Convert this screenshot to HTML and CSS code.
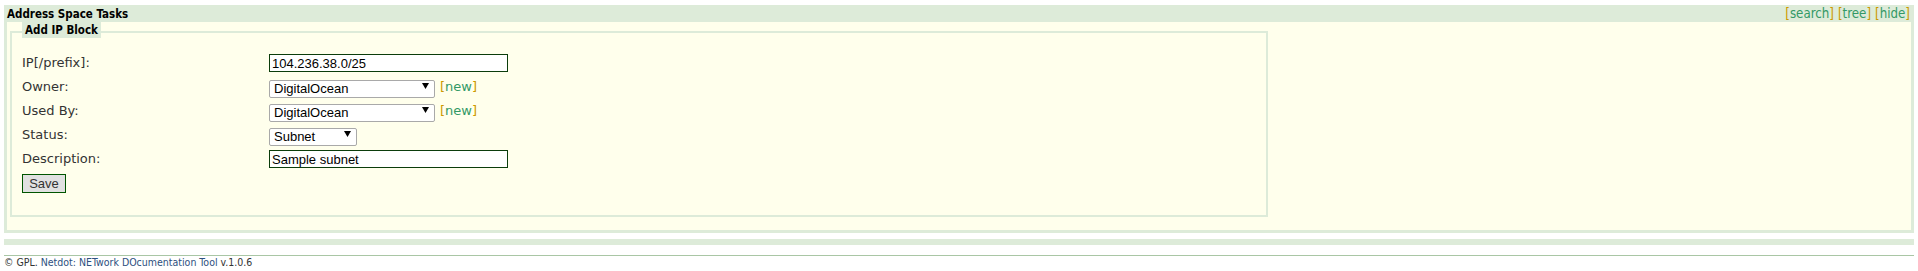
FILE: index.html
```html
<!DOCTYPE html>
<html lang="en">
<head>
<meta charset="utf-8">
<title>Netdot - Address Space Tasks</title>
<link rel="stylesheet" href="styles.css">
</head>
<body>
<div class="page">
  <div class="panel">
    <div class="panel-head">
      <span class="panel-title">Address Space Tasks</span>
      <span class="panel-links">
        <a class="lnk" href="#"><span class="br">[</span>search<span class="br">]</span></a>
        <a class="lnk" href="#"><span class="br">[</span>tree<span class="br">]</span></a>
        <a class="lnk" href="#"><span class="br">[</span>hide<span class="br">]</span></a>
      </span>
    </div>
    <div class="panel-body">
      <fieldset class="form-box">
        <legend class="form-legend">Add IP Block</legend>
        <div class="form-grid">
          <label class="form-label">IP[/prefix]:</label>
          <div class="form-ctl"><input class="txt" type="text" value="104.236.38.0/25"></div>

          <label class="form-label">Owner:</label>
          <div class="form-ctl">
            <span class="sel sel-wide"><select><option>DigitalOcean</option></select></span>
            <a class="lnk lnk-new" href="#"><span class="br">[</span>new<span class="br">]</span></a>
          </div>

          <label class="form-label">Used By:</label>
          <div class="form-ctl">
            <span class="sel sel-wide"><select><option>DigitalOcean</option></select></span>
            <a class="lnk lnk-new" href="#"><span class="br">[</span>new<span class="br">]</span></a>
          </div>

          <label class="form-label">Status:</label>
          <div class="form-ctl">
            <span class="sel sel-narrow"><select><option>Subnet</option></select></span>
          </div>

          <label class="form-label">Description:</label>
          <div class="form-ctl"><input class="txt" type="text" value="Sample subnet"></div>
        </div>
        <button class="btn" type="button">Save</button>
      </fieldset>
    </div>
  </div>
  <div class="bar"></div>
  <div class="footer">
    <span class="muted">&copy; GPL.</span>
    <a class="foot-link" href="#">Netdot: NETwork DOcumentation Tool</a>
    <span class="muted">v.1.0.6</span>
  </div>
</div>
</body>
</html>
```

FILE: styles.css
```css
* { box-sizing: border-box; }

html, body {
  margin: 0;
  padding: 0;
  background: #ffffff;
}

body {
  font-family: "DejaVu Sans", Verdana, sans-serif;
  color: #333;
}

.page {
  padding: 5px 4px 0;
}

.panel-head {
  height: 17px;
  background: #ddebd9;
  display: flex;
  justify-content: space-between;
  align-items: baseline;
  padding: 2px 4px 0 3px;
}

.panel-title {
  font-family: "DejaVu Sans Condensed", "DejaVu Sans", sans-serif;
  font-weight: bold;
  font-size: 11.5px;
  line-height: 14px;
  color: #000;
}

.panel-links {
  font-family: "DejaVu Sans Condensed", "DejaVu Sans", sans-serif;
  font-size: 13.2px;
  line-height: 14px;
  display: flex;
  gap: 4px;
}

.lnk {
  color: #339966;
  text-decoration: none;
}

.lnk .br {
  color: #cc9900;
}

.panel-body {
  background: #ffffec;
  border: 3px solid #ddebd9;
  border-top: 0;
  padding: 0 3px 13px;
}

.form-box {
  width: 1258px;
  margin: 0;
  border: 2px solid #ddebd9;
  padding: 12px 10px 22px;
  min-width: 0;
}

.form-legend {
  font-family: "DejaVu Sans Condensed", "DejaVu Sans", sans-serif;
  font-weight: bold;
  font-size: 11.5px;
  line-height: 16px;
  color: #000;
  background: #ddebd9;
  background-clip: padding-box;
  border-bottom: 4px solid transparent;
  padding: 0 3px;
}

.form-grid {
  display: grid;
  grid-template-columns: 247px auto;
  grid-auto-rows: 18px;
  row-gap: 6px;
  align-items: center;
}

.form-label {
  font-size: 13px;
  line-height: 18px;
  color: #333;
}

.form-ctl {
  display: flex;
  align-items: center;
  gap: 5px;
  height: 18px;
}

.txt {
  width: 239px;
  height: 18px;
  border: 1px solid #0b3d0b;
  padding: 0 2px;
  margin: 0;
  font-family: "Liberation Sans", Arial, sans-serif;
  font-size: 13px;
  color: #000;
  background: #fff;
  outline: none;
}

.sel {
  position: relative;
  display: inline-block;
  height: 18px;
}

.sel select {
  -webkit-appearance: none;
  appearance: none;
  width: 100%;
  height: 18px;
  margin: 0;
  border: 1px solid #a9a9a9;
  border-radius: 2px;
  background: #fff;
  padding: 0 0 0 4px;
  font-family: "Liberation Sans", Arial, sans-serif;
  font-size: 13px;
  color: #000;
}

.sel::after {
  content: "";
  position: absolute;
  right: 6px;
  top: 5px;
  width: 7px;
  height: 6px;
  background: #000;
  clip-path: polygon(0 0, 100% 0, 50% 100%);
  pointer-events: none;
}

.sel-wide { width: 166px; }
.sel-narrow { width: 88px; }

.lnk-new {
  font-size: 13px;
  line-height: 18px;
}

.btn {
  display: block;
  margin: 6px 0 0;
  width: 44px;
  height: 19px;
  padding: 0;
  border: 1px solid #005500;
  background: #e1e1e1;
  font-family: "Liberation Sans", Arial, sans-serif;
  font-size: 13px;
  color: #333;
}

.bar {
  height: 6px;
  margin-top: 6px;
  background: #ddebd9;
}

.footer {
  margin-top: 10px;
  border-top: 1px solid #a9c6a5;
  font-family: "DejaVu Sans Condensed", "DejaVu Sans", sans-serif;
  font-size: 10.5px;
  line-height: 12px;
  padding-top: 0;
}

.muted { color: #333; }

.foot-link {
  color: #2d4f80;
  text-decoration: none;
}
```
